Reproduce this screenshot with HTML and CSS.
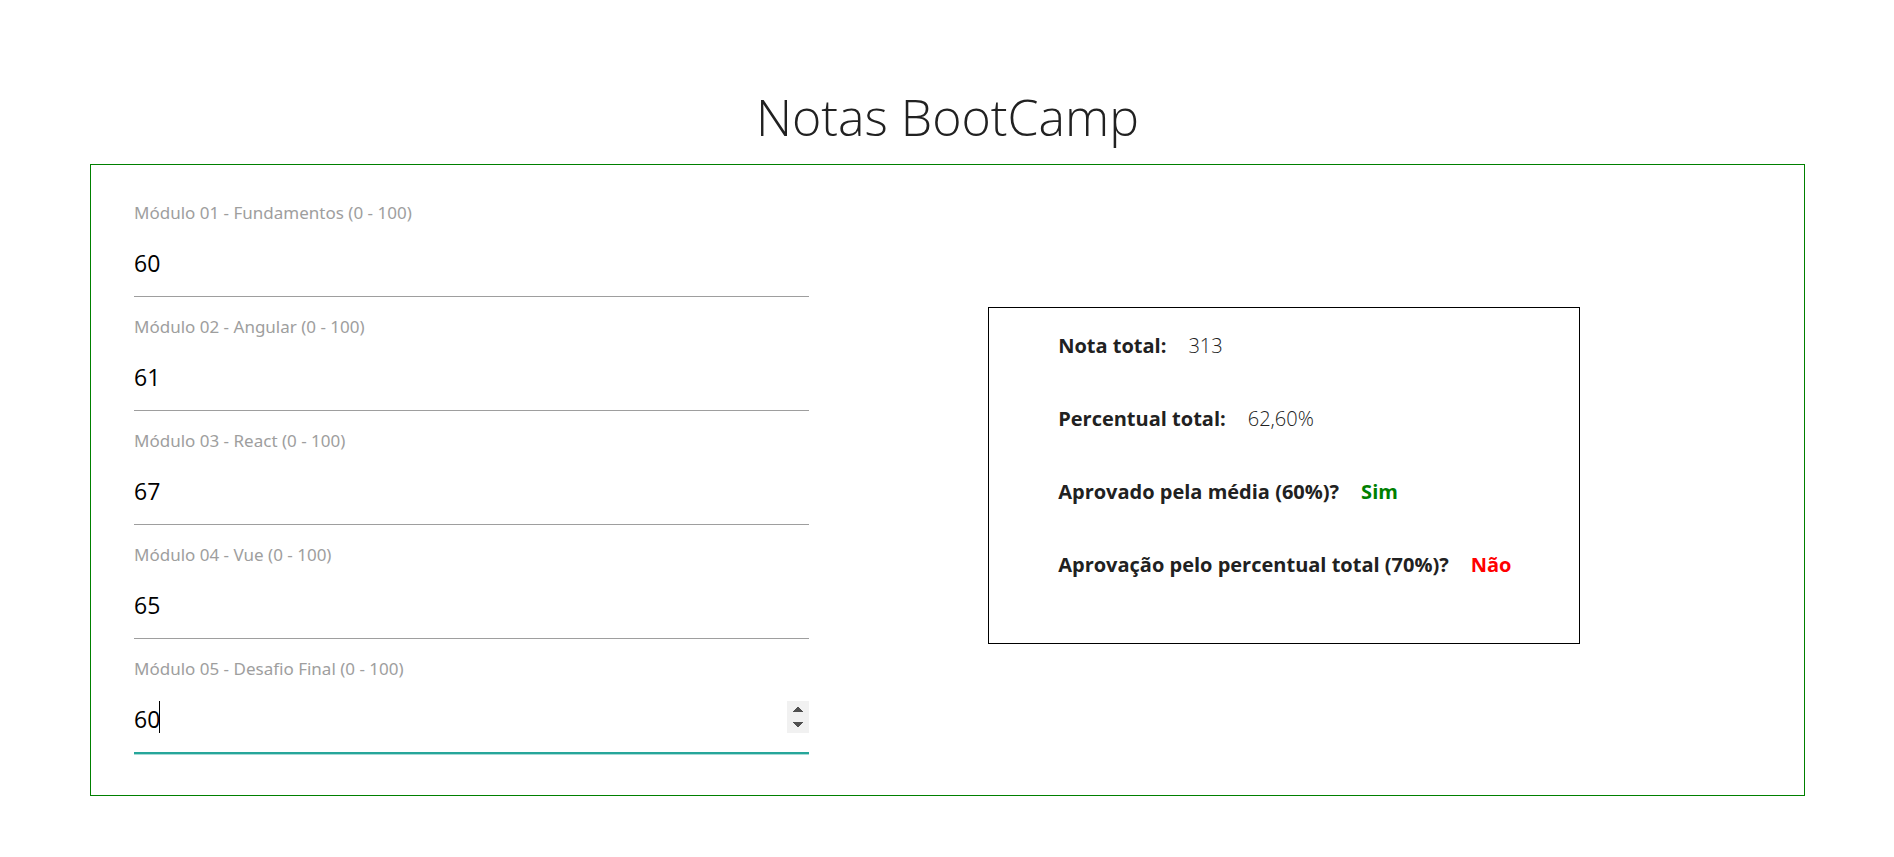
FILE: index.html
```html
<!DOCTYPE html>
<html lang="pt-BR">
<head>
<meta charset="utf-8">
<title>Notas BootCamp</title>
<link rel="stylesheet" href="styles.css">
</head>
<body>
<main class="page">
  <h1 class="title">Notas BootCamp</h1>
  <div class="panel">
    <form class="fields">
      <div class="field">
        <label class="field-label" for="m1">Módulo 01 - Fundamentos (0 - 100)</label>
        <div class="control"><input class="field-input" id="m1" type="number" min="0" max="100" value="60"></div>
      </div>
      <div class="field">
        <label class="field-label" for="m2">Módulo 02 - Angular (0 - 100)</label>
        <div class="control"><input class="field-input" id="m2" type="number" min="0" max="100" value="61"></div>
      </div>
      <div class="field">
        <label class="field-label" for="m3">Módulo 03 - React (0 - 100)</label>
        <div class="control"><input class="field-input" id="m3" type="number" min="0" max="100" value="67"></div>
      </div>
      <div class="field">
        <label class="field-label" for="m4">Módulo 04 - Vue (0 - 100)</label>
        <div class="control"><input class="field-input" id="m4" type="number" min="0" max="100" value="65"></div>
      </div>
      <div class="field">
        <label class="field-label" for="m5">Módulo 05 - Desafio Final (0 - 100)</label>
        <div class="control">
          <input class="field-input is-active" id="m5" type="number" min="0" max="100" value="60">
          <span class="caret"></span>
          <svg class="spinner" width="22" height="32" viewBox="0 0 22 32" shape-rendering="crispEdges" aria-hidden="true">
            <rect width="22" height="32" fill="#f1f1f1"/>
            <path d="M10 6h2v1h1v1h1v1h1v1h1v1H6v-1h1V9h1V8h1V7h1z" fill="#505050"/>
            <path d="M6 21h10v1h-1v1h-1v1h-1v1h-1v1h-2v-1H9v-1H8v-1H7v-1H6z" fill="#505050"/>
          </svg>
        </div>
      </div>
    </form>
    <section class="results">
      <p class="result"><strong>Nota total:</strong><span class="value">313</span></p>
      <p class="result"><strong>Percentual total:</strong><span class="value">62,60%</span></p>
      <p class="result"><strong>Aprovado pela média (60%)?</strong><strong class="yes">Sim</strong></p>
      <p class="result"><strong>Aprovação pelo percentual total (70%)?</strong><strong class="no">Não</strong></p>
    </section>
  </div>
</main>
</body>
</html>
```
FILE: styles.css
```css
* { box-sizing: border-box; }

body {
  margin: 0;
  background: #fff;
  color: #212121;
  font-family: "Segoe UI", "Open Sans", "Noto Sans", sans-serif;
}

.page { padding: 83px 89px 60px 90px; }

.title {
  margin: 0 0 13px;
  font-size: 50px;
  line-height: 68px;
  font-weight: 300;
  text-align: center;
}

.panel {
  display: flex;
  align-items: center;
  gap: 11%;
  padding: 18px 43px 42px;
  border: 1px solid green;
}

.fields { width: 41.5%; }

.field { padding-top: 18px; }

.field-label {
  display: block;
  margin-bottom: 6px;
  font-family: "Segoe UI", "Noto Sans", "Open Sans", sans-serif;
  font-size: 17px;
  line-height: 24px;
  color: #9e9e9e;
}

.control { position: relative; }

.field-input {
  display: block;
  width: 100%;
  height: 66px;
  padding: 0 0 2px;
  border: 0;
  border-bottom: 1px solid #9e9e9e;
  border-radius: 0;
  outline: 0;
  background: transparent;
  color: #000;
  font-family: inherit;
  font-size: 23px;
  appearance: textfield;
}

.field-input::-webkit-inner-spin-button { appearance: none; margin: 0; }

.is-active {
  border-bottom-color: #26a69a;
  box-shadow: 0 1px 0 0 #26a69a, 0 2px 0 0 #a8dbd7;
}

.caret {
  position: absolute;
  left: 25px;
  top: 14px;
  width: 1px;
  height: 32px;
  background: #000;
}

.spinner {
  position: absolute;
  right: 0;
  top: 14px;
}

.results {
  display: flex;
  flex-direction: column;
  gap: 43px;
  width: 36.4%;
  margin-top: 15px;
  padding: 23px 20px 63px 69px;
  border: 1px solid #000;
}

.result {
  display: flex;
  gap: 22px;
  margin: 0;
  font-size: 20px;
  line-height: 30px;
  white-space: nowrap;
}

.value { font-weight: 300; }
.yes { color: green; }
.no { color: red; }
```
